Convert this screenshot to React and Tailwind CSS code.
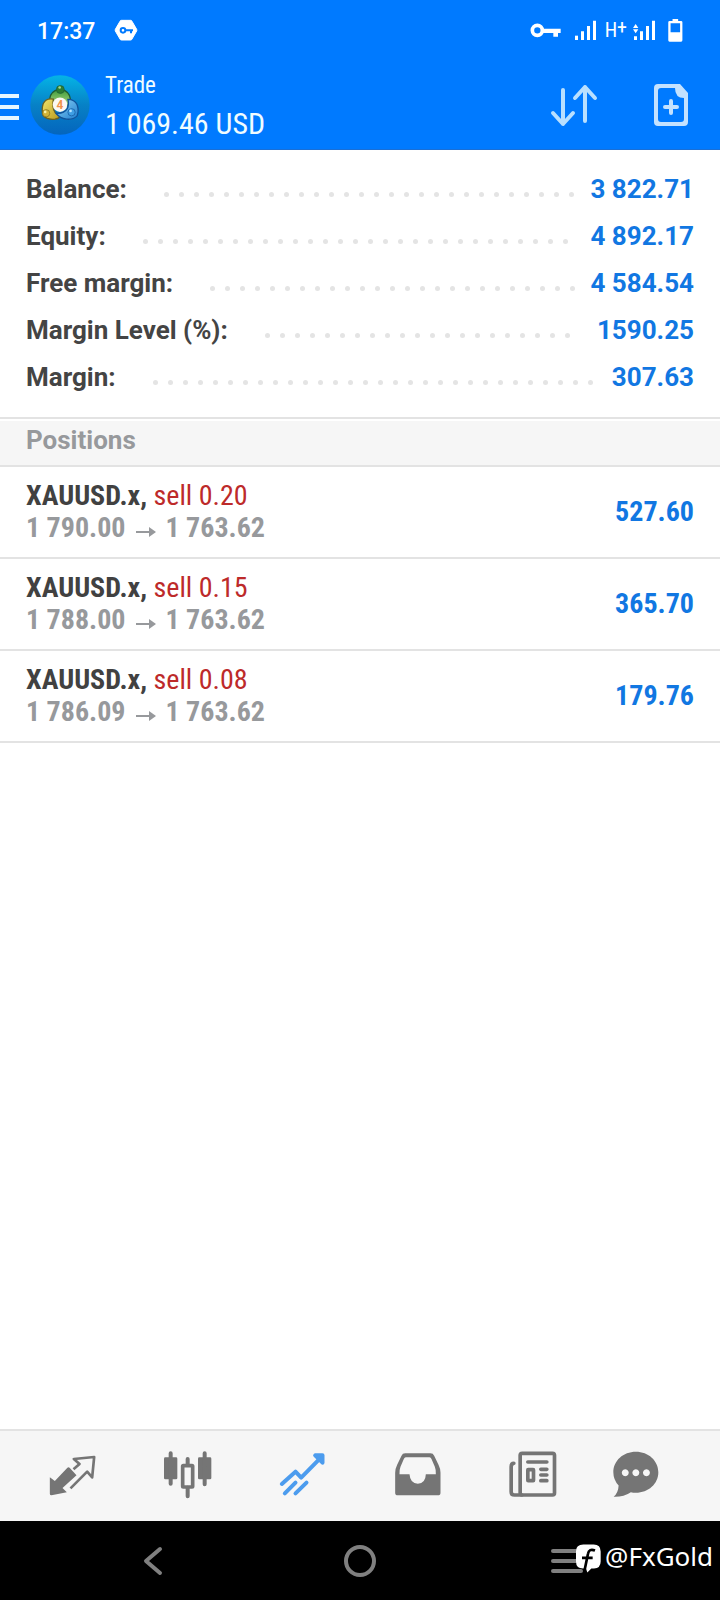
import React from 'react';

const summary = [
    { label: 'Balance:', value: '3 822.71' },
    { label: 'Equity:', value: '4 892.17' },
    { label: 'Free margin:', value: '4 584.54' },
    { label: 'Margin Level (%):', value: '1590.25' },
    { label: 'Margin:', value: '307.63' },
];

const positions = [
    { id: 1, symbol: 'XAUUSD.x', side: 'sell 0.20', open: '1 790.00', current: '1 763.62', profit: '527.60' },
    { id: 2, symbol: 'XAUUSD.x', side: 'sell 0.15', open: '1 788.00', current: '1 763.62', profit: '365.70' },
    { id: 3, symbol: 'XAUUSD.x', side: 'sell 0.08', open: '1 786.09', current: '1 763.62', profit: '179.76' },
];

function VpnBadge() {
    return (
        <svg viewBox="340 55 72 66" className="w-6 h-[22px]">
            <path d="M362 59h28q3 0 4 3l14 24q1 3 0 5l-14 24q-1 3-4 3h-28q-3 0-4-3l-14-24q-1-3 0-5l14-24q1-3 4-3z" fill="#fff" stroke="#fff" strokeWidth="3" />
            <circle cx="367" cy="89" r="7" fill="none" stroke="#007aff" strokeWidth="6" />
            <path d="M375 86h22v6h-3v6h-6v-6h-13z" fill="#007aff" />
        </svg>
    );
}

function Signal({ data }) {
    return (
        <svg viewBox="231 58 66 60" className="w-[22px] h-5 overflow-visible" fill="#fff">
            {!data && <path d="M231 105h9v13h-9z" />}
            {data && <path d="M231 107h9v11h-9zM228 82l8-12 8 12zM228 86h16l-8 12z" />}
            <path d="M249 92h9v26h-9zM267 76h9v42h-9zM285 60h9v58h-9z" />
        </svg>
    );
}

function StatusBar() {
    return (
        <div className="flex items-center justify-between h-[60px] px-[37px]">
            <div className="flex items-center gap-[19px]">
                <span className="pt-[3px] text-[23px] leading-[28px] font-medium">17:37</span>
                <VpnBadge />
            </div>
            <div className="flex items-center">
                <svg viewBox="94 66 93 45" className="w-[31px] h-[15px]">
                    <circle cx="116" cy="88" r="15" fill="none" stroke="#fff" strokeWidth="11" />
                    <path d="M133 83h53v13h-8v11h-14v-11h-31z" fill="#fff" />
                </svg>
                <span className="ml-[14px]"><Signal /></span>
                <span className="flex items-start ml-2 text-[20px] leading-[20px] font-['Roboto_Condensed',Roboto,sans-serif]">
                    H<span className="text-[20px] leading-[14px]">+</span>
                </span>
                <span className="ml-[7px]"><Signal data /></span>
                <svg viewBox="505 54 44 70" className="w-[15px] h-[23px] ml-3">
                    <path fill="#fff" fillRule="evenodd" d="M518 54h17v6h9q4 0 4 4v55q0 4-4 4h-35q-4 0-4-4v-55q0-4 4-4h9zM512 67v27h29v-27z" />
                </svg>
            </div>
        </div>
    );
}

function AppLogo() {
    return (
        <svg viewBox="90 224 180 182" className="w-[60px] h-[60px]">
            <defs>
                <linearGradient id="disc" x1="0" y1="0" x2="0" y2="1">
                    <stop offset="0" stopColor="#05b4e6" />
                    <stop offset="0.5" stopColor="#0781c6" />
                    <stop offset="1" stopColor="#0465bd" />
                </linearGradient>
                <linearGradient id="green" x1="0" y1="0" x2="0" y2="1">
                    <stop offset="0" stopColor="#3f9a3b" />
                    <stop offset="1" stopColor="#a5d67c" />
                </linearGradient>
                <linearGradient id="gold" x1="0" y1="0" x2="1" y2="1">
                    <stop offset="0" stopColor="#f1e56c" />
                    <stop offset="1" stopColor="#b99a1c" />
                </linearGradient>
                <linearGradient id="blue" x1="0" y1="0" x2="1" y2="1">
                    <stop offset="0" stopColor="#8fd3f5" />
                    <stop offset="1" stopColor="#1e7fd0" />
                </linearGradient>
            </defs>
            <circle cx="180" cy="315" r="90" fill="url(#disc)" />
            <path d="M149 308q-3-26 15-36 16-8 32 0 18 10 15 36-3 9-12 6-4-18-19-18t-19 18q-9 2-12-6z" fill="url(#green)" stroke="#1d5b35" strokeWidth="4" />
            <path d="M160 297q-22-4-31 14-6 20 0 36 12 14 36 11 12-2 16-10-20-6-22-28-1-14 1-23z" fill="url(#gold)" stroke="#6b6120" strokeWidth="4" />
            <path d="M204 298q20 0 28 16 6 18 0 34-12 12-32 10-20-2-32-18 24 2 34-14 6-12 2-28z" fill="url(#blue)" stroke="#10529a" strokeWidth="4" />
            <circle cx="181" cy="268" r="12" fill="#2c7d33" stroke="#1d5b35" strokeWidth="2" />
            <circle cx="179" cy="262" r="4" fill="#a9dc8d" />
            <circle cx="138" cy="340" r="11" fill="#d2b437" stroke="#7b691e" strokeWidth="2" />
            <circle cx="135" cy="336" r="4" fill="#fbf3a8" />
            <circle cx="215" cy="337" r="11" fill="#3f9fe4" stroke="#10529a" strokeWidth="2" />
            <circle cx="212" cy="333" r="4" fill="#b8e5ff" />
            <circle cx="180" cy="314" r="22" fill="#fbf8f2" />
            <text x="180" y="327" textAnchor="middle" fontSize="36" fontWeight="700" fill="#f0924a">4</text>
        </svg>
    );
}

function Header() {
    return (
        <header className="bg-[#007aff] text-white border-b border-[#1a6fd6]">
            <StatusBar />
            <div className="flex items-center h-[89px] pr-[32px]">
                <button aria-label="Menu" className="flex flex-col gap-[7px] w-[19px] mt-1">
                    <span className="h-1 w-full bg-[#e6f6ff]" />
                    <span className="h-1 w-full bg-[#e6f6ff]" />
                    <span className="h-1 w-full bg-[#e6f6ff]" />
                </button>
                <span className="ml-[11px]"><AppLogo /></span>
                <div className="ml-[15px] font-['Roboto_Condensed',Roboto,sans-serif] text-[#f0fcff]">
                    <h1 className="text-[23px] leading-[38px]">Trade</h1>
                    <p className="text-[30px] leading-[38px]">1 069.46 USD</p>
                </div>
                <button aria-label="Sort" className="ml-auto">
                    <svg viewBox="0 0 48 44" className="w-12 h-11" fill="none" stroke="#b9e0ff" strokeWidth="4" strokeLinecap="round" strokeLinejoin="round">
                        <path d="M13 7v34M3 30l10 11 10-11M35 38V4M25 15L35 4l10 11" />
                    </svg>
                </button>
                <button aria-label="New order" className="ml-[56px]">
                    <svg viewBox="0 0 34 42" className="w-[34px] h-[42px]">
                        <path d="M4 0h22l8 9v29q0 4-4 4H4q-4 0-4-4V4q0-4 4-4zM7 4Q4 4 4 7v28q0 3 3 3h20q3 0 3-3V14q-9 0-9-10z" fill="#c4e2ff" fillRule="evenodd" />
                        <path d="M17 17v12M11 23h12" stroke="#c4e2ff" strokeWidth="4" strokeLinecap="round" />
                    </svg>
                </button>
            </div>
        </header>
    );
}

// Only whole dots are shown, the rest wrap out of sight
function DotLeader() {
    return (
        <div className="flex flex-wrap flex-1 gap-[10px] h-[5px] mt-[10px] ml-[37px] mr-[14px] overflow-hidden">
            {Array.from({ length: 80 }, (_, i) => (
                <span key={i} className="w-[5px] h-[5px] rounded-full bg-[#e4e4e4]" />
            ))}
        </div>
    );
}

function Summary() {
    return (
        <dl className="py-4 border-b-2 border-[#e3e3e3] text-[26px] font-bold">
            {summary.map((row) => (
                <div key={row.label} className="flex items-center h-[47px] px-[26px]">
                    <dt className="text-[#444444]">{row.label}</dt>
                    <DotLeader />
                    <dd className="text-[#1177e2]">{row.value}</dd>
                </div>
            ))}
        </dl>
    );
}

function Positions() {
    return (
        <section>
            <h2 className="mt-[2px] pb-[6px] pl-[26px] bg-[#f6f6f6] border-b-2 border-[#e3e3e3] text-[26px] leading-[38px] font-bold text-[#97999c]">
                Positions
            </h2>
            <ul className="font-['Roboto_Condensed',Roboto,sans-serif] text-[28px] leading-[32px] font-bold">
                {positions.map((p) => (
                    <li key={p.id} className="flex items-center justify-between py-[13px] px-[26px] border-b-2 border-[#e3e3e3]">
                        <div>
                            <p className="text-[28px] leading-[32px] text-[#414141]">
                                {p.symbol}, <span className="font-normal text-[#bd2a2a]">{p.side}</span>
                            </p>
                            <p className="flex items-center text-[#97999c]">
                                {p.open}
                                <svg viewBox="0 0 20 10" className="w-5 h-[10px] mx-[10px] mt-2" fill="none" stroke="#97999c" strokeWidth="2">
                                    <path d="M0 5h17" />
                                    <path d="M13 0l7 5-7 5z" fill="#97999c" stroke="none" />
                                </svg>
                                {p.current}
                            </p>
                        </div>
                        <span className="text-[#1177e2]">{p.profit}</span>
                    </li>
                ))}
            </ul>
        </section>
    );
}

function TabBar() {
    return (
        <nav className="grid grid-cols-[repeat(5,115fr)_92fr] items-center justify-items-center h-[92px] pl-[15px] pr-[38px] pb-0.5 bg-[#f6f6f6] border-t-2 border-[#e3e3e3] text-[#757575]">
            <a href="#quotes" aria-label="Quotes">
                <svg viewBox="58 92 140 144" className="w-[47px] h-12" fill="currentColor">
                    <path d="M60 171l15 11 37-39q4-4 8 0l20 22-42 38 13 13-46 9q-5 0-5-5z" />
                    <path d="M131 147l18-16-17-15 61-6-6 61-15-17-50 50" fill="none" stroke="currentColor" strokeWidth="8" strokeLinejoin="round" />
                </svg>
            </a>
            <a href="#charts" aria-label="Charts">
                <svg viewBox="399 92 147 144" className="w-[49px] h-12" fill="currentColor">
                    <rect x="402" y="111" width="40" height="66" rx="4" />
                    <rect x="504" y="111" width="40" height="66" rx="4" />
                    <rect x="458" y="136" width="30" height="64" rx="2" fill="none" stroke="currentColor" strokeWidth="11" />
                    <path d="M422 99v91M524 99v93M473 116v18M473 202v26" stroke="currentColor" strokeWidth="12" strokeLinecap="round" />
                </svg>
            </a>
            <a href="#trade" aria-label="Trade" aria-current="page" className="text-[#4c9cee]">
                <svg viewBox="87 92 140 144" className="w-[47px] h-12" fill="none" stroke="currentColor" strokeWidth="12" strokeLinecap="round" strokeLinejoin="round">
                    <path d="M95 191l41-37 17 18 62-63M104 219l32-32M136 219l33-32" />
                    <path d="M195 105h22v22z" fill="currentColor" />
                </svg>
            </a>
            <a href="#history" aria-label="History">
                <svg viewBox="432 92 140 144" className="w-[47px] h-12" fill="currentColor">
                    <path fillRule="evenodd" d="M465 99h76q8 0 11 7l13 27q6 12 6 24v60q0 8-8 8h-120q-8 0-8-8v-60q0-12 6-24l13-27q3-7 11-7zM467 111q-4 0-6 5l-10 23q-4 10-3 23h30q2 28 25 28t24-28h30q1-13-3-23l-10-23q-2-5-6-5z" />
                </svg>
            </a>
            <a href="#news" aria-label="News">
                <svg viewBox="89 92 143 144" className="w-12 h-12" fill="none" stroke="currentColor" strokeWidth="11" strokeLinecap="round" strokeLinejoin="round">
                    <rect x="122" y="99" width="103" height="125" rx="6" />
                    <path d="M103 129q-8 0-8 10v75q0 10 10 10h22M145 125h57M184 147h18M184 164h18M184 181h18" />
                    <rect x="145" y="148" width="17" height="33" rx="1" />
                </svg>
            </a>
            <a href="#messages" aria-label="Messages">
                <svg viewBox="399 92 139 144" className="w-[46px] h-12" fill="currentColor">
                    <path fillRule="evenodd" d="M468 94c38 0 68 27 68 62s-30 62-68 62q-8 0-15-2-22 15-52 14 14-12 15-34-16-17-16-40c0-35 30-62 68-62zM436 147a10.500 10.500 0 1 0 0.100 0zM468 147a10.500 10.500 0 1 0 0.100 0zM500 147a10.500 10.500 0 1 0 0.100 0z" />
                </svg>
            </a>
        </nav>
    );
}

function SystemBar() {
    return (
        <div className="relative grid grid-cols-3 items-center justify-items-center h-[79px] px-[49px] bg-black">
            <button aria-label="Back">
                <svg viewBox="0 0 20 30" className="w-5 h-[30px]" fill="none" stroke="#808080" strokeWidth="4" strokeLinecap="round" strokeLinejoin="round">
                    <path d="M17 3L3 15l14 12" />
                </svg>
            </button>
            <button aria-label="Home" className="w-8 h-8 rounded-full border-4 border-[#808080]" />
            <button aria-label="Recent apps" className="flex flex-col gap-[6px] w-8">
                <span className="h-1 rounded-full bg-[#808080]" />
                <span className="h-1 rounded-full bg-[#808080]" />
                <span className="h-1 rounded-full bg-[#808080]" />
            </button>
            <div className="absolute right-[7px] top-4 flex items-center gap-1 text-white">
                <svg viewBox="290 371 75 86" className="w-[25px] h-[29px] mt-1">
                    <path d="M312 372h31q21 0 21 21v30q0 20-20 21h-8l-12 12-4-12h-9q-21 0-21-21v-31q0-20 22-20z" fill="#fff" />
                    <path d="M347 390q-18-7-21 10l-10 48M308 412h32" fill="none" stroke="#000" strokeWidth="8" />
                </svg>
                <span className="font-['Noto_Sans',sans-serif] text-[26px] leading-[38px]">@FxGold</span>
            </div>
        </div>
    );
}

function App() {
    return (
        <div className="flex flex-col min-h-screen bg-white font-['Roboto',sans-serif]">
            <Header />
            <main className="flex-1">
                <Summary />
                <Positions />
            </main>
            <TabBar />
            <SystemBar />
        </div>
    );
}

export default App;
